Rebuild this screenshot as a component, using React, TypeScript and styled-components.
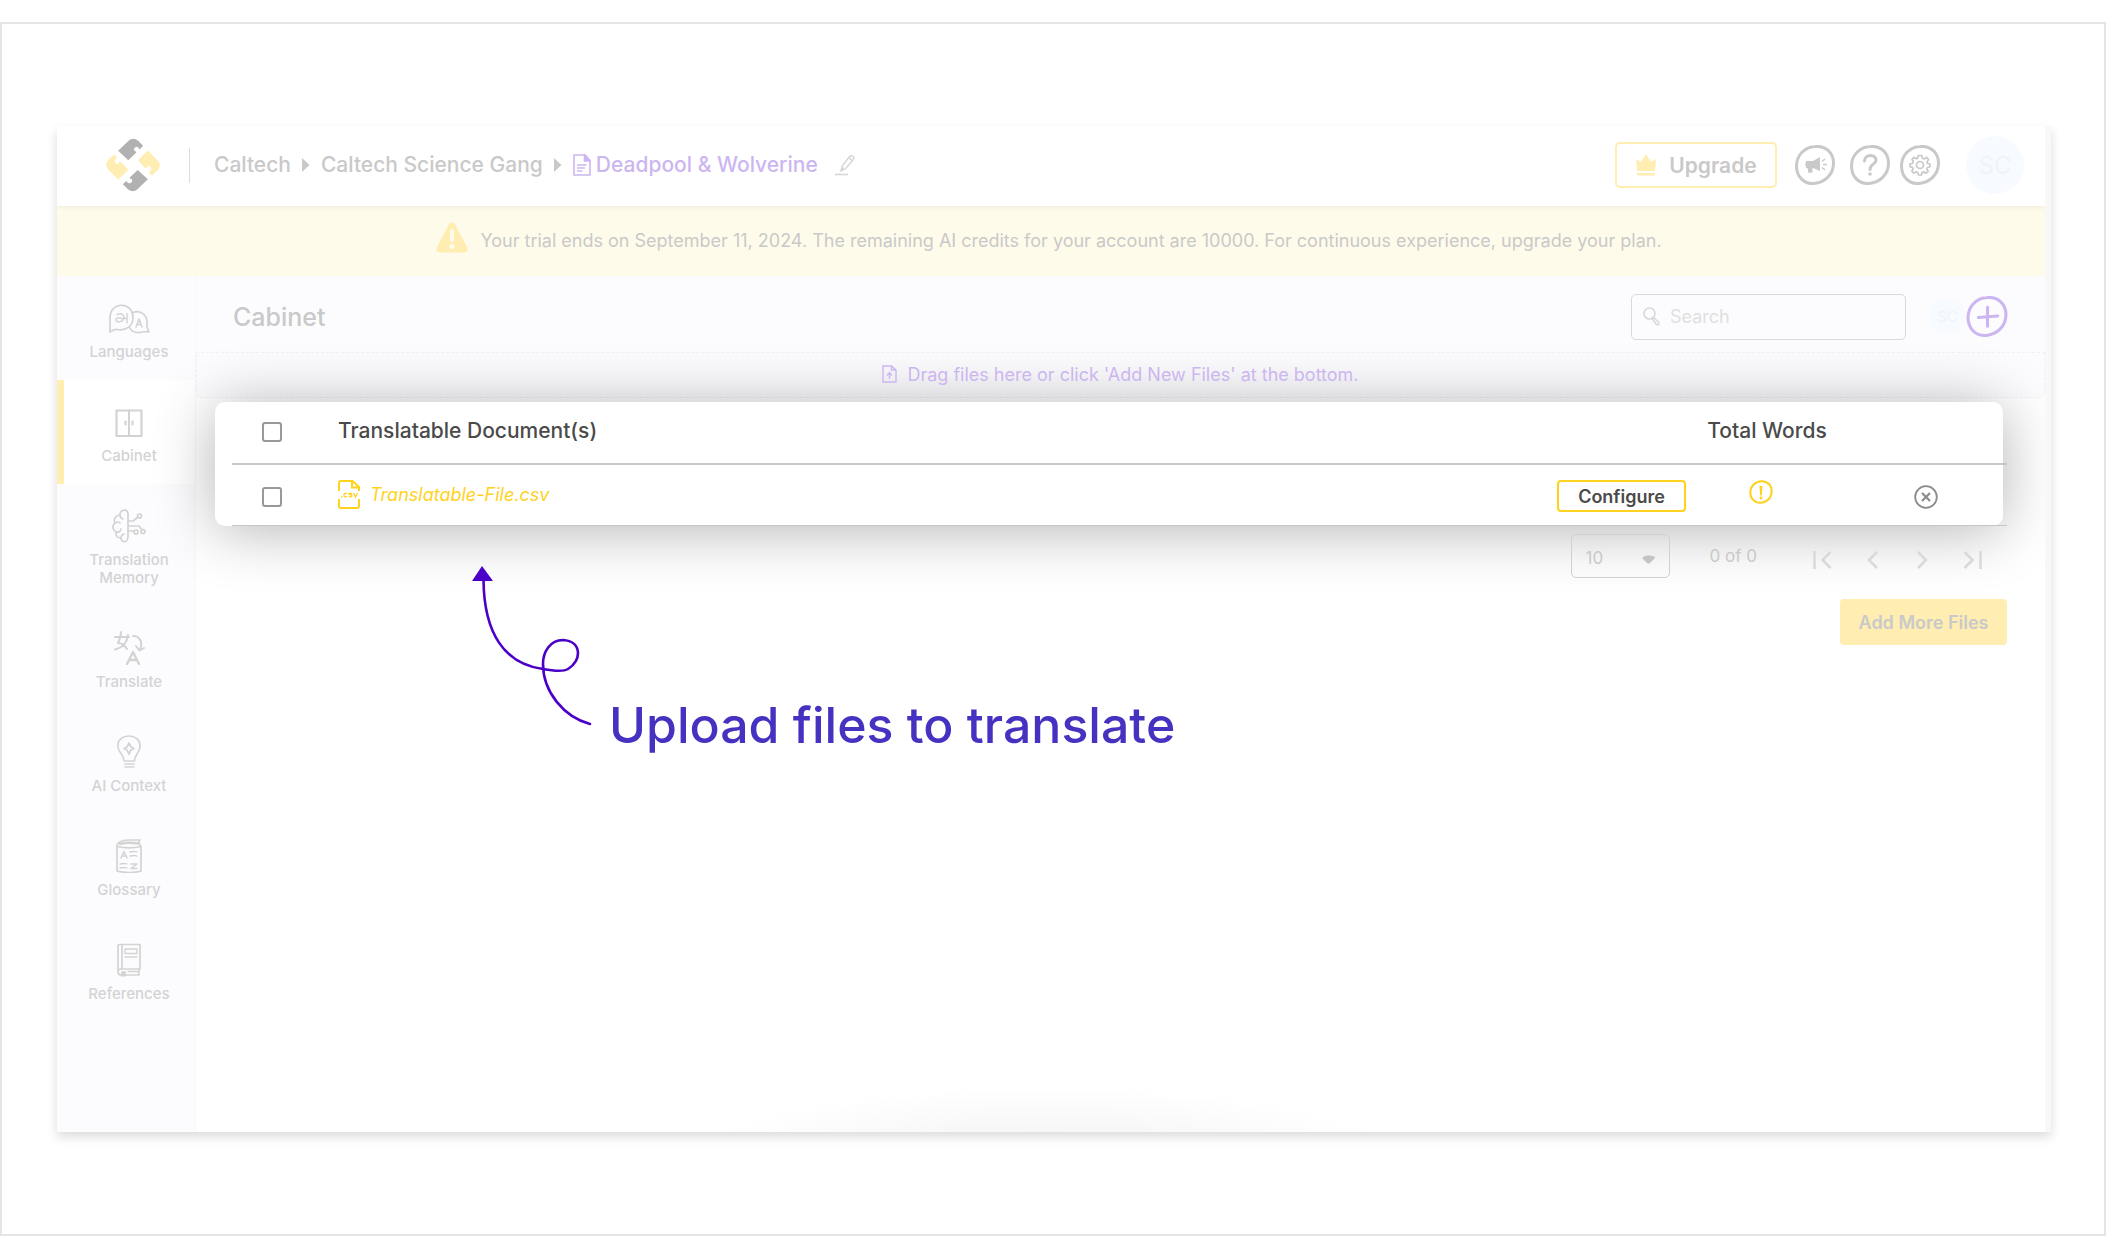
import React from "react";
import styled, { createGlobalStyle } from "styled-components";

const ink = "#c9c9c9";
const faint = "#d3d3d4";
const violet = "#ccb6f1";
const lemon = "#ffedb2";
const gold = "#ffd21f";
const rule = "#c6c6c6";

const Global = createGlobalStyle`
  *, *::before, *::after { box-sizing: border-box; }
  body { margin: 0; background: #fff; font-family: Inter, "Open Sans", sans-serif; color: ${ink}; }
  button, input, select { font: inherit; color: inherit; }
  button { cursor: pointer; padding: 0; border: 0; background: none; }
  a { color: inherit; text-decoration: none; }
  svg { display: block; flex: none; }
`;

const Page = styled.div`
  padding: 22px 0 20px;
`;
const Frame = styled.div`
  border: 2px solid #e5e5e5;
  padding: 102px 53px 102px 55px;
`;
const Window = styled.div`
  padding-right: 6px;
  background: #f8f8f8;
  box-shadow: 0 5px 10px rgba(0, 0, 0, 0.14);
`;
const AppShell = styled.div`
  background: #fff;
  overflow: hidden;
`;

const Header = styled.header`
  position: relative;
  display: flex;
  align-items: center;
  height: 80px;
  padding: 0 21px 2px 49px;
  background: #fff;
  box-shadow: 0 1px 5px rgba(0, 0, 0, 0.07);
`;
const Divider = styled.span`
  width: 1px;
  height: 35px;
  margin: 0 24px 0 29px;
  background: #dcdcdc;
`;
const Crumbs = styled.nav`
  display: flex;
  align-items: center;
  gap: 11px;
  flex: 1;
  font-size: 21px;
  font-weight: 500;
  line-height: 28px;
`;
const Current = styled.a`
  display: flex;
  align-items: center;
  gap: 5px;
  color: ${violet};
`;
const IconButton = styled.button<{ $gap?: number }>`
  display: flex;
  margin-left: ${(p) => p.$gap ?? 0}px;
`;
const Upgrade = styled.button`
  display: flex;
  align-items: center;
  justify-content: center;
  gap: 12px;
  width: 162px;
  height: 46px;
  border: 2px solid ${lemon};
  border-radius: 5px;
  font-size: 21px;
  font-weight: 600;
`;
const Avatar = styled.span<{ $size: number }>`
  display: flex;
  align-items: center;
  justify-content: center;
  width: ${(p) => p.$size}px;
  height: ${(p) => p.$size}px;
  border-radius: 50%;
  background: #f7fbff;
  color: #eef4fa;
  font-size: ${(p) => (p.$size > 40 ? 24 : 15)}px;
`;
const HeaderAvatar = styled(Avatar)`
  margin-left: 26px;
`;

const Banner = styled.div`
  display: flex;
  justify-content: center;
  gap: 12px;
  height: 70px;
  padding: 16px 4px 0 0;
  background: #fffbeb;
  font-size: 18px;
  line-height: 38px;
`;

const Body = styled.div`
  display: flex;
`;
const Sidebar = styled.aside`
  width: 139px;
  flex: none;
  padding-bottom: 110px;
  background: #fcfcfe;
  border-right: 1px solid #f7f7f8;
`;
const NavItem = styled.a<{ $active?: boolean }>`
  display: flex;
  flex-direction: column;
  align-items: center;
  gap: 8px;
  min-height: 104px;
  padding: 25px 17px 19px 23px;
  background: ${(p) => (p.$active ? "#fff" : "transparent")};
  box-shadow: ${(p) => (p.$active ? `inset 7px 0 ${lemon}` : "none")};
  color: ${faint};
  font-size: 15px;
  font-weight: 500;
  line-height: 18px;
  text-align: center;
`;
const Main = styled.main`
  position: relative;
  flex: 1;
  min-width: 0;
  background: radial-gradient(360px 80px at 46% 104%, #f0f0f0, #fff 100%);
`;
const Toolbar = styled.div`
  display: flex;
  align-items: center;
  height: 76px;
  padding: 5px 37px 0 37px;
  background: #fcfcfe;
`;
const Title = styled.h1`
  flex: 1;
  margin: 0;
  font-size: 25px;
  font-weight: 500;
  line-height: 30px;
`;
const SearchBox = styled.label`
  display: flex;
  align-items: center;
  gap: 10px;
  width: 275px;
  height: 46px;
  margin-right: 23px;
  padding: 0 11px;
  border: 1px solid #dadada;
  border-radius: 5px;
  font-size: 18px;
`;
const SearchInput = styled.input`
  width: 100%;
  border: 0;
  outline: 0;
  padding: 0;
  background: none;
  &::placeholder { color: #e0e0e0; opacity: 1; }
`;
const DropZone = styled.div`
  display: flex;
  align-items: center;
  justify-content: center;
  gap: 10px;
  height: 46px;
  padding-bottom: 2px;
  border: 1px dashed #f1f1f3;
  border-radius: 0 0 6px 6px;
  background: #fcfcfe;
  color: ${violet};
  font-size: 18px;
`;
const Panel = styled.section`
  margin: 4px 42px 0 19px;
  background: #fff;
  border-radius: 10px;
  box-shadow: 0 4px 60px rgba(0, 0, 0, 0.3);
`;
const FilesTable = styled.table`
  width: calc(100% - 13px);
  margin: 0 -4px -1px 17px;
  border-collapse: separate;
  border-spacing: 0;
  table-layout: fixed;
  color: #4a4a4a;
`;
const HeadCell = styled.th<{ $center?: boolean }>`
  height: 63px;
  padding: 0 0 4px;
  border-bottom: 2px solid ${rule};
  font-size: 21px;
  font-weight: 500;
  text-align: ${(p) => (p.$center ? "center" : "left")};
`;
const Cell = styled.td<{ $align?: string }>`
  height: 61px;
  padding: 2px 0 0;
  border-bottom: 1px solid ${rule};
  text-align: ${(p) => p.$align ?? "left"};
`;
const Check = styled.input`
  appearance: none;
  display: block;
  width: 20px;
  height: 20px;
  margin: 2px 0 0 30px;
  border: 2px solid #999;
  border-radius: 3px;
  background: #fff;
`;
const FileLink = styled.a`
  display: inline-flex;
  align-items: center;
  gap: 10px;
  color: ${gold};
  font-size: 18px;
  font-style: italic;
`;
const Configure = styled.button`
  width: 129px;
  height: 32px;
  margin-right: 3px;
  border: 2px solid ${gold};
  border-radius: 4px;
  font-size: 18px;
  font-weight: 600;
`;
const StatusIcon = styled.span`
  display: inline-flex;
  padding: 0 12px 8px 0;
`;
const RemoveButton = styled.button`
  display: inline-flex;
  padding-top: 5px;
`;

const Lower = styled.div`
  display: flex;
  justify-content: space-between;
  padding: 9px 38px 0 276px;
`;
const Note = styled.div`
  display: flex;
  align-items: flex-start;
  gap: 17px;
  padding-top: 32px;
`;
const NoteText = styled.p`
  margin: 0;
  padding-top: 129px;
  color: #4632c0;
  font-size: 50px;
  font-weight: 500;
  line-height: 60px;
  white-space: nowrap;
`;
const Controls = styled.div`
  display: flex;
  flex-direction: column;
  align-items: flex-end;
  gap: 21px;
`;
const Pagination = styled.nav`
  display: flex;
  align-items: center;
  padding-right: 10px;
  font-size: 17px;
`;
const SelectBox = styled.span`
  position: relative;
  display: block;
`;
const PageSize = styled.select`
  appearance: none;
  width: 99px;
  height: 44px;
  padding: 3px 14px 0;
  border: 1px solid #d0d0d0;
  border-radius: 5px;
  background: transparent;
`;
const Caret = styled.svg`
  position: absolute;
  right: 15px;
  top: 21px;
  pointer-events: none;
`;
const Range = styled.span`
  margin: 0 40px;
`;
const PagerButton = styled.button`
  display: flex;
  justify-content: center;
  width: 50px;
  padding-top: 7px;
`;
const AddFiles = styled.button`
  width: 167px;
  height: 46px;
  border-radius: 4px;
  background: ${lemon};
  font-size: 18px;
  font-weight: 600;
`;

const Logo = () => (
  <svg width="54" height="54" viewBox="0 0 160 160" role="img" aria-label="Home">
    <g fill="#b1b1b1">
      <path d="M36 38 66 9Q80-4 95 8L110 23 100 33Q97 34 97 29 91 23 85 29 80 36 86 39 91 39 89 44L66 66Z" />
      <path d="M124 122 94 151Q80 164 65 152L50 137 58 129Q63 127 63 131 69 137 76 131 80 124 74 121 69 121 71 116L94 95Z" />
    </g>
    <g fill={lemon}>
      <path d="M36 124 8 95Q-6 80 6 66L24 49 32 58Q32 62 28 64 23 70 30 76 36 79 39 73 40 69 45 72L66 94Z" />
      <path d="M124 37 152 65Q166 80 154 94L136 112 128 103Q128 99 132 97 137 90 130 84 124 81 121 87 120 92 115 88L95 66Z" />
    </g>
  </svg>
);

const Arrow = () => (
  <svg width="8" height="14" viewBox="0 0 8 14" fill={ink} aria-hidden="true">
    <path d="M0 0 7.500 7 0 14Z" />
  </svg>
);

const DocIcon = () => (
  <svg width="18" height="22" viewBox="0 0 18 22" fill="none" stroke={violet} strokeWidth="1.600" aria-hidden="true">
    <path d="M1 1H12L17 6.500V21H1Z" />
    <path d="M11.500 1V7H17L12 1Z" fill={violet} />
    <path d="M4 11H13.500M4 14H12M4 17H9.500" />
  </svg>
);

const PencilIcon = () => (
  <svg width="20" height="21" viewBox="0 0 20 21" fill="none" stroke="#d4d4d4" strokeWidth="1.300" aria-hidden="true">
    <path d="M6 16 6.800 11.500 14.500 1.500Q16 0 18 1.500 19.500 3 18.300 4.500L10.300 14Z" />
    <path d="M13.800 2.500 17.200 5.500M6 16 8.500 12.500M0 19.500H13" />
  </svg>
);

const CrownIcon = () => (
  <svg width="22" height="22" viewBox="0 0 22 22" fill={lemon} aria-hidden="true">
    <path d="M1 5 6 8 11 0 16 8 21 5 20 17H2Z" />
    <path d="M2 19H20V21.500H2Z" />
  </svg>
);

const ring = "M20 1.500C31 .500 38.500 8 38.500 18 38.500 30 29.500 37.500 19 38.500 8.500 39 1.500 31.500 1.500 21 1.500 10 10 2 20 1.500Z";

const MegaphoneIcon = () => (
  <svg width="40" height="40" viewBox="0 0 40 40" aria-hidden="true">
    <path d={ring} fill="none" stroke={ink} strokeWidth="3" />
    <path d="M11 16H18L25 12V26L18 23H17.500V27.500L13.500 28 12.500 23H11Q9.500 19 11 16Z" fill={ink} />
    <path d="M27 16.500 30 14M28 19.500H32M27 22.500 30 25" stroke={ink} strokeWidth="1.500" />
  </svg>
);

const HelpIcon = () => (
  <svg width="40" height="40" viewBox="0 0 40 40" fill="none" stroke={ink} strokeWidth="3" aria-hidden="true">
    <path d={ring} />
    <path d="M14.500 16C14.500 8.500 26.500 9 26 15.500 25.500 19.500 20 19 20 24.500" strokeLinecap="round" />
    <circle cx="20" cy="29" r="1.800" fill={ink} stroke="none" />
  </svg>
);

const GearIcon = () => (
  <svg width="40" height="40" viewBox="0 0 40 40" fill="none" stroke={ink} aria-hidden="true">
    <path d={ring} strokeWidth="3" />
    <circle cx="20" cy="20" r="3.500" strokeWidth="1.700" />
    <path
      strokeWidth="1.700"
      strokeLinejoin="round"
      d="M18.200 10.500H21.800L22.500 13.200 24.200 14 26.600 12.300 28.600 14.600 27 17 27.600 18.400 30 19V21.800L27.500 22.500 26.800 24 28.200 26.300 26 28.200 23.800 26.900 22 27.600 21.500 30H18.500L17.900 27.600 16 26.900 13.900 28.200 11.800 26.200 13.100 24 12.500 22.300 10 21.700V18.900L12.600 18.200 13.300 16.500 12 14.300 14 12.300 16.200 13.700 17.700 13.100Z"
    />
  </svg>
);

const PlusIcon = () => (
  <svg width="42" height="41" viewBox="0 0 40 40" fill="none" stroke={violet} strokeWidth="3" strokeLinecap="round" aria-hidden="true">
    <path d={ring} />
    <path d="M20.500 11V29.500M11.500 21 30.500 19.500" />
  </svg>
);

const WarningIcon = () => (
  <svg width="32" height="31" viewBox="0 0 32 31" aria-hidden="true">
    <path d="M13 2Q16-1.500 19 2L31 25Q33 30 28 30.500H4Q-1 30 1 25Z" fill={lemon} />
    <path d="M16 9V18" stroke="#fffbeb" strokeWidth="4" strokeLinecap="round" />
    <circle cx="16" cy="24.500" r="2.600" fill="#fffbeb" />
  </svg>
);

const SearchIcon = () => (
  <svg width="17" height="19" viewBox="0 0 17 19" fill="none" stroke="#d9d9d9" strokeWidth="1.600" aria-hidden="true">
    <circle cx="6.500" cy="6.500" r="5.500" />
    <path d="M9 11.500 10.800 10.600 15.500 15Q16.500 17 15.300 18 13 17.500 11.500 15Z" />
  </svg>
);

const UploadIcon = () => (
  <svg width="15" height="18" viewBox="0 0 15 18" fill="none" stroke={violet} strokeWidth="1.400" aria-hidden="true">
    <path d="M1 1H9.500L14 5V17H1ZM9.500 1V5H14" />
    <path d="M7.500 14V8M5 10.500 7.500 7.500 10 10.500" />
  </svg>
);

const CsvIcon = () => (
  <svg width="22" height="29" viewBox="0 0 22 29" fill="none" stroke={gold} strokeWidth="2" aria-hidden="true">
    <path d="M1 11V3Q1 1 3 1H14.500L21 7V11M14 1.500V7.500H21M1 19V26Q1 28 3 28H19Q21 28 21 26V19" />
    <path strokeWidth="1.300" d="M3 17H4.500M9.300 13.700Q6 12.500 6 15 6 17.500 9.300 16.500M14 13.500Q11 12.800 11 14.300 14 14.700 14 16 13.500 17.300 10.800 16.700M15.500 13 17.500 17 19.500 13" />
  </svg>
);

const AlertIcon = () => (
  <svg width="24" height="24" viewBox="0 0 24 24" aria-hidden="true">
    <path d="M12.500 1.200C18.500 1 22.800 5.500 22.700 11.500 22.500 18 17.500 22.700 11.500 22.800 5.500 22.800 1.200 18.500 1.300 12.500 1.400 6 6.500 1.400 12.500 1.200Z" fill="none" stroke={gold} strokeWidth="2" />
    <path d="M10.500 6H13.500L12.800 15.500H11.200Z" fill={gold} />
    <circle cx="12" cy="18" r="1.400" fill={gold} />
  </svg>
);

const RemoveIcon = () => (
  <svg width="24" height="24" viewBox="0 0 24 24" fill="none" stroke="#8b8b8b" strokeWidth="1.800" aria-hidden="true">
    <circle cx="12" cy="12" r="10.800" />
    <path d="M8 8 16 16M16 8 8 16" strokeWidth="2.200" />
  </svg>
);

type LineProps = { w: number; h: number; children: React.ReactNode };
const Line = ({ w, h, children }: LineProps) => (
  <svg width={w} height="34" viewBox={`0 0 ${w} ${h}`} fill="none" stroke="#d3d3d4" strokeWidth="1.700" strokeLinejoin="round" strokeLinecap="round" aria-hidden="true">
    {children}
  </svg>
);

const items = [
  {
    label: "Languages",
    icon: (
      <Line w={42} h={34}>
        <path d="M2 31V17C2 0 25 0 25 17 25 27 15 30 9 28.500 6 28 4 30 2 31Z" />
        <path d="M24 12C32 8 39 14 39 21V26L41 31C37 30 36 31 32 31.500 27 32 23 30 22 27" />
        <path d="M9 13.500C13 11.500 17 13.500 15.500 18 14 22 8 21.500 8 18.500 8 16.500 12 17 15 17.500M15.500 17.500H19M19 12.500V22" strokeWidth="1.400" />
        <path d="M28 26 31 18 34 26M29 23.500H33" strokeWidth="1.500" />
      </Line>
    ),
  },
  {
    label: "Cabinet",
    icon: (
      <Line w={28} h={34}>
        <path d="M1.500 5.500H26.500V31H1.500Z" strokeWidth="2.200" />
        <path d="M14 5.500V31" strokeWidth="2" />
        <path d="M10.500 16.500V19.500M17.500 16.500V19.500" strokeWidth="2.200" />
      </Line>
    ),
  },
  {
    label: "Translation Memory",
    icon: (
      <Line w={34} h={34}>
        <path d="M16 4V28C15 35 9 33 9 29 5 29 3 26 4.500 23 0 21 0 16 3 14 1 10 4 6 8 6 8 0 15 0 16 4Z" />
        <path d="M8 6Q8 9 11 10M3 14Q6 12 8 14M4.500 23Q8 24 9 20M9 29Q9 26 12 25M16 12H21L26 8M16 17H27L30 21M16 22H22" />
        <circle cx="27.500" cy="7" r="2" />
        <circle cx="31" cy="22.500" r="2" />
        <circle cx="24" cy="23" r="2" />
      </Line>
    ),
  },
  {
    label: "Translate",
    icon: (
      <Line w={32} h={34}>
        <path d="M2 6H16M8 1C8 7 6 10 5 12 9 12 12 15 14 18M15 4C14 12 9 17 2 18.500" strokeWidth="2" />
        <path d="M20 5C27 5 30 11 27 19M23 15 26.500 19.500 31 17" strokeWidth="2" />
        <path d="M14 33 20 21 26 33M16 29H24" strokeWidth="2.300" />
      </Line>
    ),
  },
  {
    label: "AI Context",
    icon: (
      <Line w={24} h={34}>
        <path d="M7 26C7 19 1 18 1 11.500-.500-2.500 24-2.500 23 11.500 23 18 17.500 19 17.500 26Z" />
        <path d="M8 29H17M8 32H17" />
        <path d="M12 8 14 12 17 13.500 14 15 12 19 10 15 7 13.500 10 12Z" />
      </Line>
    ),
  },
  {
    label: "Glossary",
    icon: (
      <Line w={26} h={34}>
        <path d="M1 7.500V32C8 34 19 34 25 32V7.500C18 9 8 9 1 7.500 0 4 6 1 12 1H24L22.500 4 25 7.500" />
        <path d="M4 5Q12 3 22 4.500" strokeWidth="2.500" />
        <path d="M5 19 8 12.500 11 19M6 17H10M15 25H21L15 29.500H21" strokeWidth="1.500" />
        <path d="M14 13Q18 12 21 13M14 17Q18 16 21 17M4 25Q8 24 11 25M4 29Q8 28 11 29" strokeWidth="1.300" />
      </Line>
    ),
  },
  {
    label: "References",
    icon: (
      <Line w={26} h={34}>
        <path d="M2 29V3Q2 1.500 4 1.500H24V26H5Q2 26 2 29 2 32 5 32H23V26M6 1.500V26" />
        <path d="M9 6H21V10.500H9ZM9 14H21M12 28.500H22" strokeWidth="1.300" />
        <path d="M6 29H9V33L7.500 32 6 33Z" fill="#d3d3d4" />
      </Line>
    ),
  },
];

const Squiggle = () => (
  <svg width="120" height="160" viewBox="0 0 120 160" aria-hidden="true">
    <path d="M0 15 10 0 21 15Z" fill="#4b00c8" />
    <path
      d="M11.500 14C12 68 33 98 71 103 82 105 91 106 96 103 110 95 110 75 91 74 78 74 71 86 71 98 71 126 92 151 118 158"
      fill="none"
      stroke="#4b00c8"
      strokeWidth="2.600"
      strokeLinecap="round"
    />
  </svg>
);

const pagers = [
  { label: "First page", d: "M1.500 0V18M17.500 1 9.500 9 17.500 17" },
  { label: "Previous page", d: "M14 1 6 9 14 17" },
  { label: "Next page", d: "M5 1 13 9 5 17" },
  { label: "Last page", d: "M1.500 1 9.500 9 1.500 17M17.500 0V18" },
];

export default function App() {
  return (
    <Page>
      <Global />
      <Frame>
        <Window>
          <AppShell>
            <Header>
              <Logo />
              <Divider />
              <Crumbs aria-label="Breadcrumb">
                <a href="#caltech">Caltech</a>
                <Arrow />
                <a href="#gang">Caltech Science Gang</a>
                <Arrow />
                <Current href="#project">
                  <DocIcon />
                  Deadpool &amp; Wolverine
                </Current>
                <IconButton $gap={6} aria-label="Rename"><PencilIcon /></IconButton>
              </Crumbs>
              <Upgrade>
                <CrownIcon />
                Upgrade
              </Upgrade>
              <IconButton $gap={18} aria-label="Announcements"><MegaphoneIcon /></IconButton>
              <IconButton $gap={15} aria-label="Help"><HelpIcon /></IconButton>
              <IconButton $gap={10} aria-label="Settings"><GearIcon /></IconButton>
              <HeaderAvatar $size={58}>SC</HeaderAvatar>
            </Header>
            <Banner role="status">
              <WarningIcon />
              <span>
                Your trial ends on September 11, 2024. The remaining AI credits for your account are 10000. For
                continuous experience, upgrade your plan.
              </span>
            </Banner>
            <Body>
              <Sidebar>
                <nav aria-label="Sections">
                  {items.map((item) => (
                    <NavItem key={item.label} href="#section" $active={item.label === "Cabinet"}>
                      {item.icon}
                      {item.label}
                    </NavItem>
                  ))}
                </nav>
              </Sidebar>
              <Main>
                <Toolbar>
                  <Title>Cabinet</Title>
                  <SearchBox>
                    <SearchIcon />
                    <SearchInput type="text" placeholder="Search" aria-label="Search" />
                  </SearchBox>
                  <Avatar $size={37}>SC</Avatar>
                  <IconButton aria-label="Add member"><PlusIcon /></IconButton>
                </Toolbar>
                <DropZone>
                  <UploadIcon />
                  Drag files here or click 'Add New Files' at the bottom.
                </DropZone>
                <Panel>
                  <FilesTable>
                    <colgroup>
                      <col width="106" />
                      <col />
                      <col width="150" />
                      <col width="156" />
                      <col width="162" />
                    </colgroup>
                    <thead>
                      <tr>
                        <HeadCell><Check type="checkbox" aria-label="Select all" /></HeadCell>
                        <HeadCell>Translatable Document(s)</HeadCell>
                        <HeadCell />
                        <HeadCell $center>Total Words</HeadCell>
                        <HeadCell />
                      </tr>
                    </thead>
                    <tbody>
                      <tr>
                        <Cell><Check type="checkbox" aria-label="Select Translatable-File.csv" /></Cell>
                        <Cell>
                          <FileLink href="#file">
                            <CsvIcon />
                            Translatable-File.csv
                          </FileLink>
                        </Cell>
                        <Cell $align="right"><Configure>Configure</Configure></Cell>
                        <Cell $align="center"><StatusIcon><AlertIcon /></StatusIcon></Cell>
                        <Cell $align="center">
                          <RemoveButton aria-label="Remove file"><RemoveIcon /></RemoveButton>
                        </Cell>
                      </tr>
                    </tbody>
                  </FilesTable>
                </Panel>
                <Lower>
                  <Note>
                    <Squiggle />
                    <NoteText>Upload files to translate</NoteText>
                  </Note>
                  <Controls>
                    <Pagination aria-label="Pagination">
                      <SelectBox>
                        <PageSize aria-label="Rows per page" defaultValue="10">
                          <option>10</option>
                          <option>20</option>
                        </PageSize>
                        <Caret width="13" height="9" viewBox="0 0 13 9" fill="#c4c4c4" aria-hidden="true">
                          <path d="M1 2Q6-.500 12 1.500 14 2 12 4L8 8Q6.500 9 5 8L1 4Q0 3 1 2Z" />
                        </Caret>
                      </SelectBox>
                      <Range>0 of 0</Range>
                      {pagers.map((p) => (
                        <PagerButton key={p.label} aria-label={p.label}>
                          <svg width="19" height="18" viewBox="0 0 19 18" fill="none" stroke="#d9d9d9" strokeWidth="2.500" aria-hidden="true">
                            <path d={p.d} />
                          </svg>
                        </PagerButton>
                      ))}
                    </Pagination>
                    <AddFiles>Add More Files</AddFiles>
                  </Controls>
                </Lower>
              </Main>
            </Body>
          </AppShell>
        </Window>
      </Frame>
    </Page>
  );
}
